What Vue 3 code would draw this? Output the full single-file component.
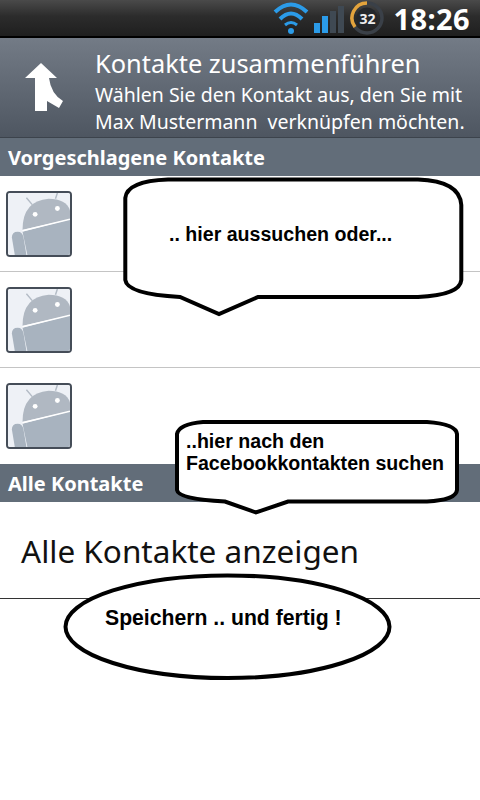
<script setup>
const rows = [1, 2, 3]
</script>

<template>
  <div class="screen">
    <header class="status">
      <svg class="wifi" width="38" height="36" viewBox="0 0 38 36" fill="none" stroke="#2b9be8" stroke-linecap="butt">
        <path d="M3 12 Q19 -3 35 12" stroke-width="4" />
        <path d="M8 19 Q19 8 30 19" stroke-width="4" />
        <path d="M13 25 Q19 20 25 25" stroke-width="3" />
        <circle cx="19" cy="31" r="3" fill="#2b9be8" stroke="none" />
      </svg>
      <div class="signal">
        <i class="bar on b1"></i><i class="bar on b2"></i><i class="bar b3"></i><i class="bar b4"></i>
      </div>
      <div class="gauge">
        <svg width="34" height="34" viewBox="0 0 34 34" fill="none">
          <circle cx="17" cy="17" r="15" stroke="#3a4048" stroke-width="3.5" />
          <circle cx="17" cy="17" r="10.5" fill="#24272b" />
          <path d="M5 26 A15 15 0 0 1 17 2" stroke="#e3a33c" stroke-width="3.5" />
        </svg>
        <span class="gauge-num">32</span>
      </div>
      <span class="clock">18:26</span>
    </header>

    <section class="title">
      <svg class="merge" width="48" height="54" viewBox="0 0 48 54">
        <path d="M21 3 L5 18 L15 18 L15 51 L27 51 L27 41 L39 48 L43 41 Q31 34 29 18 L37 18 Z" fill="#fff" />
      </svg>
      <div class="title-text">
        <h1>Kontakte zusammenführen</h1>
        <p>Wählen Sie den Kontakt aus, den Sie mit<br />Max Mustermann&nbsp; verknüpfen möchten.</p>
      </div>
    </section>

    <h2 class="section">Vorgeschlagene Kontakte</h2>
    <div v-for="r in rows" :key="r" class="row">
      <div class="avatar">
        <svg width="62" height="62" viewBox="0 0 64 64">
          <rect width="64" height="64" fill="#eef1f6" />
          <path d="M19 5 L25 12 M51 0 L49 6" stroke="#b4bcc6" stroke-width="1.5" />
          <path d="M15 38 Q15 8 42 6 Q60 6 64 18 L64 27 Z" fill="#b0b8c2" />
          <path d="M15 40 L64 27 L64 64 L20 64 Z" fill="#a8b3bf" />
          <path d="M4 46 Q4 40 10 40 Q15 40 16 46 L19 64 L7 64 Z" fill="#a8b3bf" />
          <circle cx="28" cy="22" r="2.5" fill="#fff" />
          <circle cx="51" cy="16" r="2.5" fill="#fff" />
          <path d="M15 39 L64 27" stroke="#fff" stroke-width="1.5" />
        </svg>
      </div>
    </div>

    <h2 class="section">Alle Kontakte</h2>
    <div class="show-all">Alle Kontakte anzeigen</div>

    <svg class="callouts" width="480" height="800" viewBox="0 0 480 800" fill="#fff" stroke="#000" stroke-width="4">
      <path d="M168 179.500 H418 Q460 181 461.300 205 V280 Q460 295 418 297 H258 L219 314 L180 297 Q127 294 125.300 280 V198 Q127 181 168 179.500 Z" />
      <path d="M203 422 H427 Q456 424 457 434 V490 Q456 500 427 501.500 H288 L256 512.500 L225 501.500 Q178 499 177 490 V434 Q179 424 203 422 Z" />
      <ellipse cx="227.500" cy="626.700" rx="162" ry="51.300" />
    </svg>
    <span class="note n1">.. hier aussuchen oder...</span>
    <span class="note n2">..hier nach den<br />Facebookkontakten suchen</span>
    <span class="note n3">Speichern .. und fertig !</span>
  </div>
</template>

<style>
body { margin: 0; background: #fff; }
</style>

<style scoped>
.screen {
  position: relative;
  width: 480px;
  height: 800px;
  overflow: hidden;
  background: #fff;
  font-family: "Noto Sans", "Open Sans", sans-serif;
}
.status {
  height: 38px;
  box-sizing: border-box;
  display: flex;
  align-items: center;
  justify-content: flex-end;
  padding-right: 10px;
  background: linear-gradient(#4a4a4a, #2c2c2c 45%, #1f1f1f);
  border-bottom: 2px solid #000;
}
.wifi { margin-right: 4px; }
.signal { display: flex; align-items: flex-end; gap: 2px; height: 27px; margin-right: 6px; margin-top: 2px; }
.bar { width: 6px; background: #3f4953; display: block; }
.bar.on { background: #2b9be8; }
.b1 { height: 10px; }
.b2 { height: 17px; }
.b3 { height: 22px; }
.b4 { height: 27px; }
.gauge { position: relative; width: 34px; height: 34px; margin-right: 9px; }
.gauge svg { display: block; }
.gauge-num {
  position: absolute;
  inset: 0;
  display: flex;
  align-items: center;
  justify-content: center;
  color: #eee;
  font: 700 14px "Noto Sans", sans-serif;
}
.clock { color: #fff; font: 700 29px/1 "Noto Sans", sans-serif; letter-spacing: .4px; }
.title {
  height: 100px;
  box-sizing: border-box;
  display: flex;
  align-items: flex-start;
  background: linear-gradient(#737b86, #4e5661);
  border-bottom: 1px solid #3c434c;
  color: #fff;
}
.merge { margin: 22px 0 0 20px; flex: none; }
.title-text { margin: 8px 0 0 27px; }
.title-text h1 { margin: 0; font-size: 25.400px; font-weight: 400; line-height: 35px; white-space: nowrap; }
.title-text p { margin: 0; font-size: 19.500px; line-height: 27px; white-space: nowrap; }
.section {
  margin: 0;
  height: 38px;
  box-sizing: border-box;
  padding-left: 8px;
  background: #626d79;
  color: #fff;
  font-size: 20px;
  font-weight: 700;
  line-height: 40px;
}
.row {
  height: 96px;
  box-sizing: border-box;
  padding: 15px 0 0 6px;
  border-bottom: 1px solid #c4c4c4;
}
.row:nth-of-type(3) { border-bottom: 0; }
.avatar {
  width: 66px;
  height: 66px;
  box-sizing: border-box;
  border: 2px solid #454d58;
  border-radius: 4px;
  overflow: hidden;
}
.avatar svg { display: block; }
.show-all {
  height: 97px;
  box-sizing: border-box;
  padding-left: 21px;
  border-bottom: 1px solid #333;
  color: #111;
  font-size: 31.500px;
  line-height: 98px;
}
.callouts { position: absolute; left: 0; top: 0; pointer-events: none; }
.note {
  position: absolute;
  color: #000;
  font: 700 19.600px/25px "Liberation Sans", Arial, sans-serif;
  white-space: nowrap;
}
.n1 { left: 169px; top: 222px; }
.n2 { left: 186px; top: 430px; line-height: 22px; }
.n3 { left: 105px; top: 605px; font-size: 21.200px; }
</style>
